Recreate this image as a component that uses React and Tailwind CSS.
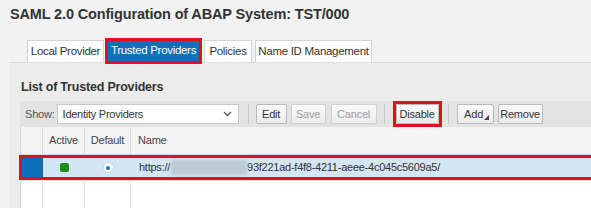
import React from "react";

function Btn({ children, disabled, className = "" }) {
  return (
    <div
      className={`h-[20px] flex items-center justify-center border border-[#b9b9b9] rounded-[2px] bg-gradient-to-b from-[#fafafa] to-[#ececec] text-[11px] tracking-[-0.2px] ${
        disabled ? "text-[#a0a0a0] border-[#cfcfcf]" : "text-[#333]"
      } ${className}`}
    >
      {children}
    </div>
  );
}

function Sep() {
  return <div className="w-px h-[20px] bg-[#c8c8c8]" />;
}

export default function App() {
  return (
    <div className="w-[591px] h-[208px] overflow-hidden bg-[#f2f2f2] font-['Liberation_Sans',Arial,sans-serif] text-[#333]">
      <div className="h-[40px] pl-[10px] pt-[6px]">
        <div className="text-[14.5px] font-bold leading-[16px] tracking-[-0.15px] text-[#333]">
          SAML 2.0 Configuration of ABAP System: TST/000
        </div>
      </div>
      {/* tabs */}
      <div className="flex items-start h-[22px] pl-[27px]">
        <div className="w-[77px] h-[22px] bg-white border border-b-0 border-[#d4d4d4] flex items-center justify-center text-[11.5px] tracking-[-0.3px] text-[#333]">
          Local Provider
        </div>
        <div className="ml-[4px] mt-[1px] w-[91px] h-[20px] bg-[#0b72b8] shadow-[0_0_0_3px_#e3101c] flex items-center justify-center text-[11.5px] tracking-[-0.3px] text-white">
          Trusted Providers
        </div>
        <div className="ml-[5px] w-[48px] h-[22px] bg-white border border-b-0 border-[#d4d4d4] flex items-center justify-center text-[11.5px] tracking-[-0.3px] text-[#333]">
          Policies
        </div>
        <div className="ml-[3px] w-[117px] h-[22px] bg-white border border-b-0 border-[#d4d4d4] flex items-center justify-center text-[11.5px] tracking-[-0.3px] text-[#333]">
          Name ID Management
        </div>
      </div>
      {/* panel */}
      <div className="ml-[9px] h-[146px] bg-[#ececec] border-t border-[#dedede]">
        <div className="pl-[12px] pt-[16px] h-[38px] text-[12.5px] font-bold leading-[16px] tracking-[-0.2px] text-[#333]">
          List of Trusted Providers
        </div>
        <div className="ml-[11px] bg-[#e3e3e3] h-[26px] flex items-center">
          <span className="ml-[5px] text-[11px] tracking-[-0.2px] text-[#555]">Show:</span>
          <div className="ml-[2px] w-[182px] h-[20px] bg-white border border-[#c9c9c9] flex items-center justify-between pl-[5px] pr-[6px]">
            <span className="text-[11px] tracking-[-0.25px] text-[#333]">Identity Providers</span>
            <svg width="9" height="6" viewBox="0 0 9 6">
              <path d="M1 1 L4.5 4.5 L8 1" fill="none" stroke="#555" strokeWidth="1.3" />
            </svg>
          </div>
          <div className="ml-[9px]">
            <Sep />
          </div>
          <Btn className="ml-[7px] w-[31px]">Edit</Btn>
          <Btn disabled className="ml-[4px] w-[35px]">Save</Btn>
          <Btn disabled className="ml-[5px] w-[46px]">Cancel</Btn>
          <div className="ml-[7px]">
            <Sep />
          </div>
          <div className="ml-[8px] border-3 border-[#e3101c] p-0">
            <Btn className="w-[43px]">Disable</Btn>
          </div>
          <div className="ml-[6px]">
            <Sep />
          </div>
          <Btn className="ml-[8px] w-[37px] relative">
            <span className="-ml-[3px]">Add</span>
            <svg className="absolute right-[4px] bottom-[3px]" width="5" height="5" viewBox="0 0 5 5">
              <path d="M5 0 L5 5 L0 5 Z" fill="#444" />
            </svg>
          </Btn>
          <Btn className="ml-[4px] w-[45px]">Remove</Btn>
        </div>
        {/* table */}
        <div className="ml-[11px] border-l border-[#d6d6d6]">
          <div className="h-[28px] bg-[#f4f4f4] border-b border-[#d8d8d8] flex text-[11px] tracking-[-0.2px] text-[#444]">
            <div className="w-[22px] border-r border-[#dcdcdc]" />
            <div className="w-[42px] border-r border-[#dcdcdc] flex items-center justify-center">Active</div>
            <div className="w-[46px] border-r border-[#dcdcdc] flex items-center justify-center">Default</div>
            <div className="flex-1 flex items-center pl-[7px]">Name</div>
          </div>
          <div className="relative h-[25px] bg-[#d4e6f4] flex text-[11px] tracking-[-0.25px] text-[#333]">
            <div className="w-[22px] bg-[#0a6fb6]" />
            <div className="w-[42px] flex items-center justify-center">
              <div className="w-[9px] h-[9px] rounded-[2px] bg-[#1a8f1a]" />
            </div>
            <div className="w-[46px] flex items-center justify-center">
              <div className="w-[11px] h-[11px] rounded-full bg-white border border-[#c4d4e0] flex items-center justify-center">
                <div className="w-[4px] h-[4px] rounded-full bg-[#1a78c2]" />
              </div>
            </div>
            <div className="flex-1 flex items-center pl-[8px]">
              <span>https://</span>
              <span className="ml-[1px] w-[76px] h-[15px] bg-[#bccad4] blur-[1.5px]" />
              <span>93f221ad-f4f8-4211-aeee-4c045c5609a5/</span>
            </div>
            <div className="absolute inset-y-0 -left-[2px] -right-[6px] border-3 border-[#e3101c] pointer-events-none" />
          </div>
          <div className="h-[40px] bg-white flex border-t border-[#e0e0e0]">
            <div className="w-[22px] border-r border-[#e0e0e0]" />
            <div className="w-[42px] border-r border-[#e0e0e0]" />
            <div className="w-[46px] border-r border-[#e0e0e0]" />
            <div className="flex-1" />
          </div>
        </div>
      </div>
    </div>
  );
}
